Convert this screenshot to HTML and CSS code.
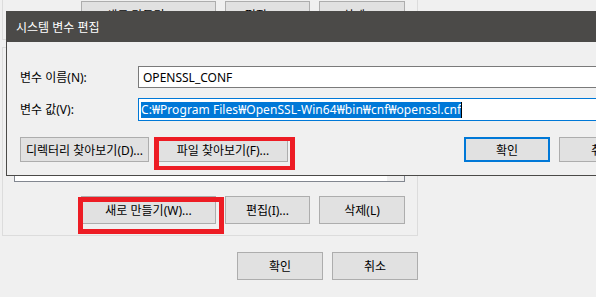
FILE: index.html
```html
<!DOCTYPE html>
<html lang="ko">
<head>
    <meta charset="UTF-8">
    <meta name="viewport" content="width=device-width, initial-scale=1.0">
    <title>환경 변수</title>
    <link rel="stylesheet" href="styles.css">
</head>
<body>
    <div class="env-window">
        <section class="group group-user">
            <div class="group-buttons">
                <button class="btn btn-new">새로 만들기(N)...</button>
                <button class="btn btn-edit">편집(E)...</button>
                <button class="btn btn-delete">삭제(D)</button>
            </div>
        </section>

        <section class="group group-system">
            <div class="listbox">
                <div class="list-area"></div>
                <div class="list-scroll"></div>
            </div>
            <div class="group-buttons">
                <button class="btn btn-new mark-new">새로 만들기(W)...</button>
                <button class="btn btn-edit">편집(I)...</button>
                <button class="btn btn-delete">삭제(L)</button>
            </div>
        </section>

        <div class="window-buttons">
            <button class="btn btn-ok">확인</button>
            <button class="btn btn-cancel">취소</button>
        </div>
    </div>

    <div class="dialog">
        <div class="titlebar">시스템 변수 편집</div>
        <div class="dialog-body">
            <div class="field">
                <label class="field-label">변수 이름(N):</label>
                <div class="textbox">OPENSSL_CONF</div>
            </div>
            <div class="field field-value">
                <label class="field-label">변수 값(V):</label>
                <div class="textbox focused"><span class="selected">C:₩Program Files₩OpenSSL-Win64₩bin₩cnf₩openssl.cnf</span><span class="caret"></span></div>
            </div>
            <div class="dialog-buttons">
                <button class="btn btn-browse-dir">디렉터리 찾아보기(D)...</button>
                <button class="btn btn-browse-file mark-file">파일 찾아보기(F)...</button>
                <div class="spacer"></div>
                <button class="btn btn-ok default">확인</button>
                <button class="btn btn-ok">취소</button>
            </div>
        </div>
    </div>
</body>
</html>
```

FILE: styles.css
```css
*,
*::after {
    margin: 0;
    padding: 0;
    box-sizing: border-box;
    font-family: 'Noto Sans', 'Noto Sans CJK KR', sans-serif;
}

body {
    width: 596px;
    height: 297px;
    overflow: hidden;
    background: #f0f0f0;
    font-size: 12px;
    color: #000;
    position: relative;
}

/* parent window (behind the dialog) */
.env-window {
    padding-left: 2px;
    width: 418px;
}

.group {
    border: 1px solid #dcdcdc;
    padding: 0 12px 0 11px;
}

.group-user {
    height: 40px;
    border-top: none;
    padding-top: 1px;
}

.group-system {
    margin-top: 7px;
    padding-top: 12px;
    padding-bottom: 11px;
}

.group-buttons {
    display: flex;
    justify-content: flex-end;
    gap: 9px;
}

.listbox {
    height: 122px;
    margin-bottom: 14px;
    border: 1px solid #828790;
    display: flex;
}

.list-area {
    flex: 1;
    background: #fff;
}

.list-scroll {
    width: 17px;
    background: #f0f0f0;
}

.window-buttons {
    display: flex;
    justify-content: flex-end;
    gap: 9px;
    margin-top: 16px;
}

.btn {
    height: 28px;
    border: 1px solid #adadad;
    background: #e1e1e1;
    color: #000;
    font-size: 12px;
    display: flex;
    align-items: center;
    justify-content: center;
    position: relative;
    white-space: nowrap;
}

.btn-new { width: 135px; }
.btn-edit { width: 85px; }
.btn-delete { width: 86px; }
.btn-ok { width: 86px; }
.btn-cancel { width: 86px; }

/* red annotation boxes */
.mark-new::after,
.mark-file::after {
    content: '';
    position: absolute;
    border: 5px solid #ed1c24;
}

.mark-new::after {
    left: -4px;
    top: 0;
    width: 146px;
    height: 37px;
}

.mark-file::after {
    left: -5px;
    top: -1px;
    width: 141px;
    height: 33px;
    border-width: 4px 5px;
}

/* edit dialog */
.dialog {
    position: absolute;
    left: 6px;
    top: 11px;
    width: 653px;
    height: 165px;
    border: 1px solid #4b4a48;
    background: #f0f0f0;
    display: flex;
    flex-direction: column;
}

.titlebar {
    height: 30px;
    background: #4b4a48;
    color: #fff;
    padding-left: 9px;
    display: flex;
    align-items: center;
}

.dialog-body {
    padding: 24px 13px 0 13px;
}

.field {
    display: flex;
    align-items: center;
}

.field-value {
    margin-top: 10px;
}

.field-label {
    width: 118px;
    padding-bottom: 1px;
}

.textbox {
    flex: 1;
    height: 22px;
    border: 1px solid #7a7a7a;
    background: #fff;
    padding-left: 4px;
    display: flex;
    align-items: center;
    white-space: nowrap;
}

.textbox.focused {
    height: 23px;
    border-color: #0078d7;
    padding-left: 2px;
}

.selected {
    background: #0078d7;
    color: #fff;
    line-height: 16px;
    letter-spacing: 0.06px;
}

.caret {
    width: 1px;
    height: 16px;
    background: #000;
}

.dialog-buttons {
    display: flex;
    gap: 9px;
    margin-top: 16px;
}

.dialog-buttons .btn {
    height: 25px;
}

.btn-browse-dir { width: 129px; }
.btn-browse-file { width: 130px; }

.spacer {
    flex: 1;
}

.btn.default {
    border: 2px solid #0078d7;
}
```
